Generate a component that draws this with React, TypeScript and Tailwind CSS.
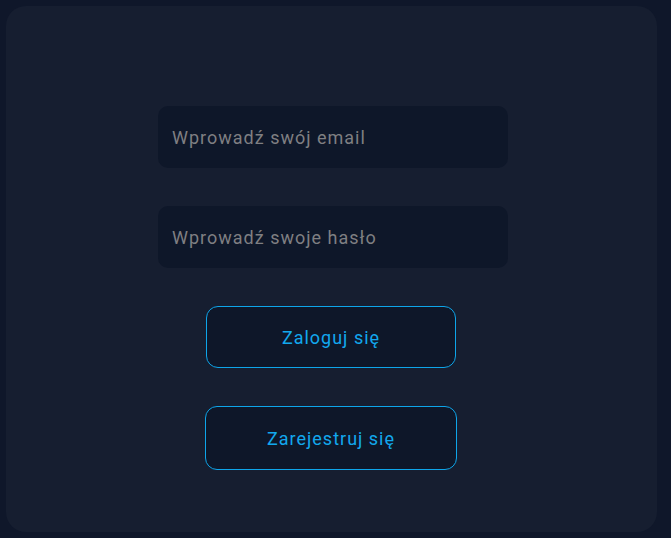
export default function App() {
  return (
    <div
      className="min-h-[538px] bg-[#0f172a] p-[6px]"
      style={{ fontFamily: "Roboto, 'Liberation Sans', sans-serif" }}
    >
      {/* CARD */}
      <div className="w-[651px] h-[526px] bg-[#161e30] rounded-[20px] pt-[100px] flex flex-col items-center">
        <div className="flex flex-col items-center gap-[38px] pl-[3px]">
          <input
            type="email"
            placeholder="Wprowadź swój email"
            className="w-[350px] h-[62px] rounded-[10px] bg-[#0e1729] px-[14px] text-[18px] tracking-[1px] text-gray-300 placeholder:text-[#7f7f82] outline-none"
          />
          <input
            type="password"
            placeholder="Wprowadź swoje hasło"
            className="w-[350px] h-[62px] rounded-[10px] bg-[#0e1729] px-[14px] text-[18px] tracking-[1px] text-gray-300 placeholder:text-[#7f7f82] outline-none"
          />
        </div>

        {/* BUTTONS */}
        <div className="flex flex-col items-center mt-[38px] pr-[1px]">
          <button className="w-[250px] h-[62px] rounded-[12px] border border-[#0ea5e9] bg-[#0e1729] text-[18px] tracking-[1px] text-[#12a8ee]">
            Zaloguj się
          </button>
          <button className="mt-[38px] w-[252px] h-[64px] rounded-[12px] border border-[#0ea5e9] bg-[#0e1729] text-[18px] tracking-[1px] text-[#12a8ee]">
            Zarejestruj się
          </button>
        </div>
      </div>
    </div>
  );
}
